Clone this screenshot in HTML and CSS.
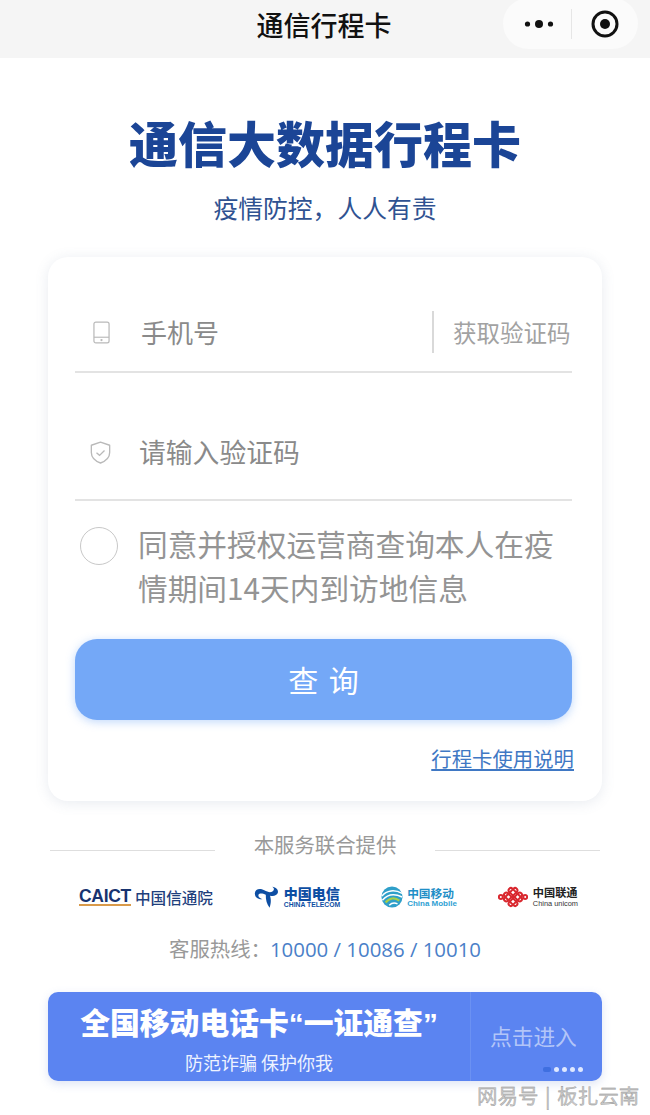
FILE: index.html
```html
<!DOCTYPE html>
<html lang="zh-CN">
<head>
<meta charset="utf-8">
<title>通信行程卡</title>
<link rel="stylesheet" href="styles.css">
</head>
<body>
<header class="nav">
  <div class="nav-title">通信行程卡</div>
  <div class="capsule">
    <svg class="cap-dots" viewBox="0 0 30 12"><circle cx="3.5" cy="6" r="2.6"/><circle cx="15" cy="6" r="4"/><circle cx="26.5" cy="6" r="2.6"/></svg>
    <span class="cap-sep"></span>
    <svg class="cap-target" viewBox="0 0 28 28"><circle cx="14" cy="14" r="12" fill="none" stroke="#111" stroke-width="3"/><circle cx="14" cy="14" r="5" fill="#111"/></svg>
  </div>
</header>
<main class="page">
  <h1 class="brand">通信大数据行程卡</h1>
  <p class="slogan">疫情防控，人人有责</p>
  <section class="card">
    <div class="field field-phone">
      <svg class="ico-phone" viewBox="0 0 18 24"><rect x="1" y="1" width="16" height="22" rx="2" fill="none" stroke="#b9b9b9" stroke-width="1.3"/><path d="M1 17h16" stroke="#b9b9b9" stroke-width="1.2"/><circle cx="9" cy="20" r="1.2" fill="#b9b9b9"/></svg>
      <span class="ph ph-phone">手机号</span>
      <span class="code-btn">获取验证码</span>
    </div>
    <div class="field field-code">
      <svg class="ico-shield" viewBox="0 0 22 24"><path d="M11 1.2 20.6 4.4V12c0 5.4-4 8.9-9.6 11C5.4 20.9 1.4 17.4 1.4 12V4.400Z" fill="none" stroke="#b9b9b9" stroke-width="1.4" stroke-linejoin="round"/><path d="M6.8 12.2 10 15l5.200-5" fill="none" stroke="#b9b9b9" stroke-width="1.4"/></svg>
      <span class="ph">请输入验证码</span>
    </div>
    <div class="agree">
      <span class="radio"></span>
      <p class="agree-text">同意并授权运营商查询本人在疫情期间14天内到访地信息</p>
    </div>
    <div class="query">查 询</div>
    <div class="help"><a class="help-link">行程卡使用说明</a></div>
  </section>
  <div class="provided">
    <span class="rule"></span>
    <span class="provided-text">本服务联合提供</span>
    <span class="rule"></span>
  </div>
  <div class="logos">
    <div class="logo logo-caict">
      <span class="caict-en">CAICT</span>
      <span class="caict-cn">中国信通院</span>
    </div>
    <div class="logo logo-telecom">
      <svg class="tel-mark" viewBox="0 0 28 26"><path d="M1 8.500C1.500 4.500 6 2.500 11.500 5.500C16 8 20 8.500 22 5.500C22.800 4 22 2.500 20.500 1.500C24.500 2 27.500 4.500 26.800 8C26 11.500 21.500 12.500 18 11.500C19 15 19.500 19 17.500 25C14.500 21.500 13 16 13.200 10.500C10 9 6 8.300 5 10.500C4.300 12.300 6 14.500 9.500 15.500C4.500 16 0.500 13 1 8.500Z" fill="#0d4ea3"/></svg>
      <div class="tel-text"><span class="tel-cn">中国电信</span><span class="tel-en">CHINA TELECOM</span></div>
    </div>
    <div class="logo logo-mobile">
      <svg class="mob-mark" viewBox="0 0 24 24"><circle cx="12" cy="12" r="11.500" fill="#2f9fc9"/><path d="M1 11C6 4.500 15 3.500 23 8" fill="none" stroke="#fff" stroke-width="1.600"/><path d="M1.500 15.500C7 9 15 8 23 12" fill="none" stroke="#fff" stroke-width="1.600"/><path d="M5 18C9 13 15 12 20 16" fill="none" stroke="#a6cf4a" stroke-width="2.400"/><path d="M9 21C12 18 15 18 18 19.500" fill="none" stroke="#fff" stroke-width="1.600"/></svg>
      <div class="mob-text"><span class="mob-cn">中国移动</span><span class="mob-en">China Mobile</span></div>
    </div>
    <div class="logo logo-unicom">
      <svg class="uni-mark" viewBox="0 0 30 26" fill="none" stroke="#d9282f" stroke-width="2"><circle cx="2.800" cy="13" r="2"/><circle cx="27.200" cy="13" r="2"/><g transform="translate(15 13) rotate(45)"><rect x="-8.500" y="-5.500" width="17" height="4.500" rx="2.200"/><rect x="-8.500" y="1" width="17" height="4.500" rx="2.200"/><rect x="-5.500" y="-8.500" width="4.500" height="17" rx="2.200"/><rect x="1" y="-8.500" width="4.500" height="17" rx="2.200"/></g></svg>
      <div class="uni-text"><span class="uni-cn">中国联通</span><span class="uni-en">China unicom</span></div>
    </div>
  </div>
  <p class="hotline">客服热线：<span class="hot-num">10000 / 10086 / 10010</span></p>
  <section class="banner">
    <div class="banner-main">
      <div class="banner-title">全国移动电话卡<span class="banner-quote">“</span>一证通查<span class="banner-quote">”</span></div>
      <div class="banner-sub">防范诈骗 保护你我</div>
    </div>
    <div class="banner-enter">点击进入</div>
    <div class="dots"><i class="dot dot-on"></i><i class="dot"></i><i class="dot"></i><i class="dot"></i><i class="dot"></i></div>
  </section>
</main>
<div class="watermark">网易号 | 板扎云南</div>
</body>
</html>
```
FILE: styles.css
```css
* { box-sizing: border-box; }
html, body { margin: 0; padding: 0; }
body {
  width: 650px;
  height: 1115px;
  overflow: hidden;
  position: relative;
  background: #fff;
  font-family: "Noto Sans CJK SC", "Noto Sans", sans-serif;
}
p, h1 { margin: 0; }

.nav {
  height: 58px;
  background: #f5f5f5;
  position: relative;
  display: flex;
  justify-content: center;
}
.nav-title {
  font-size: 27px;
  line-height: 50px;
  font-weight: 500;
  color: #111;
  margin-right: 2px;
}
.capsule {
  position: absolute;
  left: 503px;
  top: -2px;
  width: 135px;
  height: 51px;
  border-radius: 26px;
  background: #fbfbfb;
  display: flex;
  align-items: center;
  padding-left: 21px;
}
.cap-dots { width: 30px; height: 12px; fill: #111; }
.cap-sep { width: 1px; height: 30px; background: #e6e6e6; margin-left: 17px; }
.cap-target { width: 28px; height: 28px; margin-left: 19px; }

.page { display: flex; flex-direction: column; align-items: center; }
.brand {
  margin-top: 48px;
  font-size: 49px;
  line-height: 72px;
  font-weight: 900;
  color: #1b4596;
  white-space: nowrap;
}
.slogan {
  margin-top: 9px;
  font-size: 24.800px;
  line-height: 40px;
  color: #2f5291;
}
.card {
  margin-top: 30px;
  width: 554px;
  height: 544px;
  border-radius: 20px;
  background: #fff;
  box-shadow: 0 2px 14px rgba(90, 110, 150, .14);
  padding: 0 30px 0 27px;
  flex: none;
}
.field {
  display: flex;
  align-items: center;
  border-bottom: 2px solid #e3e3e3;
  color: #8e8e8e;
}
.field-phone { height: 116px; padding-top: 36px; }
.field-code { height: 128px; padding-top: 32px; }
.ico-phone { width: 17px; height: 23px; margin-left: 18px; flex: none; }
.ico-shield { width: 21px; height: 23px; margin-left: 15px; flex: none; }
.ph { font-size: 26.800px; line-height: 40px; margin-left: 28px; color: #8a8a8a; }
.ph-phone { font-size: 26px; margin-left: 31px; flex: 1; }
.code-btn {
  font-size: 23.500px;
  line-height: 42px;
  color: #a2a2a2;
  border-left: 2px solid #d9d9d9;
  padding-left: 19px;
  margin-right: 3px;
  width: 137px;
  white-space: nowrap;
}
.agree { display: flex; margin-top: 22px; }
.radio {
  width: 38px;
  height: 38px;
  border-radius: 50%;
  border: 1.500px solid #c8c8c8;
  margin-left: 5px;
  margin-top: 4px;
  flex: none;
}
.agree-text {
  margin-left: 20px;
  margin-top: -1px;
  width: 420px;
  font-size: 29.700px;
  line-height: 44px;
  color: #949494;
}
.query {
  margin-top: 29px;
  height: 81px;
  border-radius: 22px;
  background: #74a8f7;
  box-shadow: 0 2px 10px rgba(116, 168, 247, .45);
  color: #fff;
  font-size: 30px;
  line-height: 81px;
  text-align: center;
  letter-spacing: 2px;
  padding-left: 2px;
  white-space: pre;
}
.help { margin-top: 22px; text-align: right; margin-right: -2px; }
.help-link {
  font-size: 20.400px;
  line-height: 32px;
  color: #3f78c4;
  text-decoration: underline;
  text-underline-offset: 2px;
}
.provided {
  margin-top: 26px;
  width: 550px;
  display: flex;
  align-items: center;
  justify-content: space-between;
}
.rule { width: 165px; height: 1px; background: #dedede; margin-top: 12px; }
.provided-text { font-size: 20.400px; line-height: 34px; color: #999; }
.logos {
  margin-top: 19px;
  width: 499px;
  margin-left: 7px;
  display: flex;
  align-items: center;
  justify-content: space-between;
  height: 34px;
}
.logo { display: flex; align-items: center; white-space: nowrap; }
.caict-en {
  font-family: "Liberation Sans", sans-serif;
  font-weight: 700;
  font-size: 17.500px;
  letter-spacing: -.3px;
  color: #17336f;
  line-height: 16px;
  border-bottom: 2px solid #d99a4a;
}
.caict-cn { font-size: 15.600px; color: #1f3f7c; margin-left: 4px; font-weight: 500; line-height: 22px; }
.tel-mark { width: 25px; height: 24px; }
.tel-text, .mob-text, .uni-text { display: flex; flex-direction: column; align-items: flex-start; }
.tel-text { margin-left: 5px; }
.tel-cn { font-size: 14px; line-height: 16px; font-weight: 900; color: #0d4ea3; }
.tel-en { font-family: "Liberation Sans", sans-serif; font-size: 6.800px; line-height: 8px; font-weight: 700; color: #0d4ea3; }
.mob-mark { width: 22px; height: 22px; }
.mob-text { margin-left: 4px; }
.mob-cn { font-size: 11.700px; line-height: 13px; font-weight: 700; color: #1f8fc7; }
.mob-en { font-family: "Liberation Sans", sans-serif; font-size: 8px; line-height: 10px; font-weight: 700; color: #2f9fd3; }
.uni-mark { width: 30px; height: 26px; }
.uni-text { margin-left: 5px; }
.uni-cn { font-size: 11.200px; line-height: 14px; font-weight: 700; color: #222; }
.uni-en { font-family: "Liberation Sans", sans-serif; font-size: 7.400px; line-height: 10px; color: #333; }
.hotline {
  margin-top: 19px;
  font-size: 20.400px;
  line-height: 30px;
  color: #999;
  white-space: nowrap;
}
.hot-num { font-family: "Open Sans", sans-serif; font-size: 20.400px; color: #4a80c8; margin-left: -1px; }
.banner {
  margin-top: 28px;
  width: 554px;
  height: 89px;
  border-radius: 10px;
  background: #5b84f1;
  box-shadow: 0 3px 10px rgba(90, 120, 200, .2);
  display: flex;
  position: relative;
  color: #fff;
}
.banner-main {
  width: 423px;
  border-right: 1px solid #6b91f2;
  text-align: center;
  padding-top: 6px;
}
.banner-title { font-size: 29.800px; line-height: 46px; font-weight: 900; white-space: nowrap; }
.banner-quote { font-family: "Liberation Sans", sans-serif; font-weight: 700; }
.banner-sub { font-size: 18px; line-height: 26px; margin-top: 2px; color: #eef3ff; }
.banner-enter { margin-left: 19px; font-size: 21.700px; line-height: 32px; margin-top: 28px; color: rgba(255, 255, 255, .55); white-space: nowrap; }
.dots { position: absolute; left: 495px; top: 75px; display: flex; gap: 3px; }
.dot { width: 5px; height: 5px; border-radius: 50%; background: #dfe8ff; }
.dot-on { width: 8px; border-radius: 2px; background: #3f6fe0; }
.watermark {
  position: absolute;
  left: 477px;
  top: 1081px;
  font-size: 20.500px;
  line-height: 28px;
  word-spacing: 2px;
  color: #c8c8c8;
  -webkit-text-stroke: .3px #888;
  white-space: nowrap;
}
```
